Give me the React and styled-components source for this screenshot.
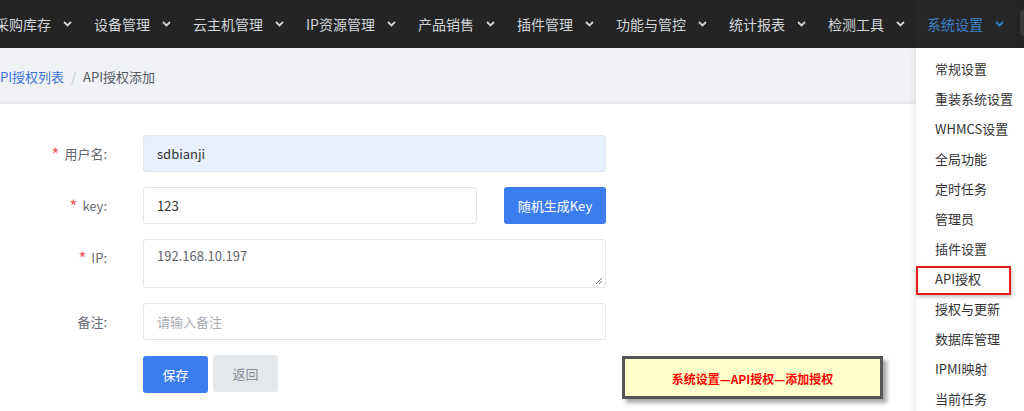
import React from "react";
import styled, { createGlobalStyle } from "styled-components";

const Global = createGlobalStyle`
  html, body { margin: 0; padding: 0; background: #fff; }
  body {
    width: 1024px; height: 411px; overflow: hidden;
    font-family: "Microsoft YaHei", "Noto Sans CJK SC", "Noto Sans", sans-serif;
  }
  * { box-sizing: border-box; }
`;

const Page = styled.div`
  position: relative;
  width: 1024px;
  height: 411px;
  overflow: hidden;
  display: flex;
  flex-direction: column;
`;

const NavBar = styled.nav`
  height: 48px;
  flex: none;
  background: #242424;
  display: flex;
  align-items: center;
  position: relative;
`;

const NavList = styled.div`
  display: flex;
  align-items: stretch;
  height: 100%;
  margin-left: -16px;
`;

const NavItem = styled.div`
  display: flex;
  align-items: center;
  padding: 0 11px;
  height: 100%;
  font-size: 14px;
  color: ${(p) => (p.$active ? "#3b82cc" : "#d3d6db")};
  background: ${(p) => (p.$active ? "#272727" : "transparent")};
  white-space: nowrap;
`;

const Chevron = styled.svg`
  margin-left: 12px;
  width: 9px;
  height: 6px;
  flex: none;
`;

const Handle = styled.div`
  position: absolute;
  right: -6px;
  top: 10px;
  width: 10px;
  height: 26px;
  border-radius: 4px;
  background: #3a3a3a;
`;

const Crumbs = styled.div`
  height: 56px;
  flex: none;
  background: #f1f2f6;
  display: flex;
  align-items: center;
  margin-left: -8px;
  font-size: 13px;
  box-shadow: inset 0 -4px 4px -3px rgba(0, 0, 0, 0.06);
`;

const CrumbLink = styled.span`
  color: #3a72d8;
`;

const CrumbSep = styled.span`
  color: #c8cbd0;
  margin: 0 7px;
`;

const CrumbCurrent = styled.span`
  color: #555a61;
`;

const Form = styled.div`
  padding-top: 31px;
  display: grid;
  grid-template-columns: 107px 463px;
  column-gap: 36px;
  row-gap: 15px;
  align-items: start;
`;

const Label = styled.div`
  height: 37px;
  display: flex;
  align-items: center;
  justify-content: flex-end;
  font-size: 13px;
  color: #666a70;
  white-space: nowrap;
`;

const Star = styled.span`
  color: #f05a5a;
  font-size: 17px;
  line-height: 1;
  margin-right: 5px;
`;

const Field = styled.div`
  display: flex;
  gap: 27px;
`;

const Input = styled.div`
  flex: ${(p) => (p.$grow ? "1" : "none")};
  width: ${(p) => p.$w || "auto"};
  height: 37px;
  border: 1px solid #e2e5e9;
  border-radius: 3px;
  background: ${(p) => (p.$autofill ? "#e8f0fe" : "#fff")};
  padding: 0 13px;
  display: flex;
  align-items: center;
  font-size: 13px;
  color: ${(p) => (p.$placeholder ? "#a8abb0" : "#333")};
`;

const TextArea = styled.div`
  position: relative;
  height: 49px;
  border: 1px solid #e2e5e9;
  border-radius: 3px;
  padding: 6px 13px;
  font-size: 13px;
  line-height: 19px;
  color: #60656c;
`;

const Grip = styled.svg`
  position: absolute;
  right: 2px;
  bottom: 2px;
  width: 8px;
  height: 8px;
`;

const Button = styled.div`
  width: ${(p) => p.$w};
  height: 37px;
  border-radius: 3px;
  display: flex;
  align-items: center;
  justify-content: center;
  font-size: 13px;
  background: ${(p) => (p.$variant === "gray" ? "#e4e8eb" : "#3b7cef")};
  color: ${(p) => (p.$variant === "gray" ? "#8a8e94" : "#fff")};
  margin-top: ${(p) => p.$mt || "0"};
`;

const Actions = styled.div`
  display: flex;
  gap: 5px;
  align-items: flex-start;
`;

const Menu = styled.div`
  position: absolute;
  left: 916px;
  top: 48px;
  width: 120px;
  height: 380px;
  background: #fff;
  box-shadow: -2px 0 6px rgba(0, 0, 0, 0.08);
  padding-top: 6px;
  display: flex;
  flex-direction: column;
`;

const MenuItem = styled.div`
  height: 30px;
  line-height: 30px;
  padding-left: 19px;
  font-size: 13px;
  color: #333;
  white-space: nowrap;
`;

const Highlight = styled.div`
  position: absolute;
  left: 916px;
  top: 266px;
  width: 95px;
  height: 29px;
  border: 2px solid #e41c1c;
  box-shadow: 1px 2px 4px rgba(0, 0, 0, 0.25);
`;

const Note = styled.div`
  position: absolute;
  left: 622px;
  top: 356px;
  width: 261px;
  height: 43px;
  background: #ffffcc;
  border: 3px solid #555;
  box-shadow: 4px 4px 4px rgba(0, 0, 0, 0.35);
  display: flex;
  align-items: center;
  justify-content: center;
  color: #f00;
  font-weight: bold;
  font-size: 12px;
  font-family: "Noto Sans CJK SC", sans-serif;
  padding-top: 1px;
`;

const navItems = [
  "采购库存",
  "设备管理",
  "云主机管理",
  "IP资源管理",
  "产品销售",
  "插件管理",
  "功能与管控",
  "统计报表",
  "检测工具",
  "系统设置",
];

const menuItems = [
  "常规设置",
  "重装系统设置",
  "WHMCS设置",
  "全局功能",
  "定时任务",
  "管理员",
  "插件设置",
  "API授权",
  "授权与更新",
  "数据库管理",
  "IPMI映射",
  "当前任务",
];

export default function App() {
  return (
    <Page>
      <Global />
      <NavBar>
        <NavList>
          {navItems.map((t) => (
            <NavItem key={t} $active={t === "系统设置"}>
              {t}
              <Chevron viewBox="0 0 9 6">
                <path
                  d="M1 1 L4.5 4.5 L8 1"
                  fill="none"
                  stroke="currentColor"
                  strokeWidth="1.8"
                />
              </Chevron>
            </NavItem>
          ))}
        </NavList>
        <Handle />
      </NavBar>
      <Crumbs>
        <CrumbLink>API授权列表</CrumbLink>
        <CrumbSep>/</CrumbSep>
        <CrumbCurrent>API授权添加</CrumbCurrent>
      </Crumbs>
      <Form>
        <Label>
          <Star>*</Star>用户名:
        </Label>
        <Field>
          <Input $grow $autofill>sdbianji</Input>
        </Field>

        <Label>
          <Star>*</Star>key:
        </Label>
        <Field>
          <Input $w="334px">123</Input>
          <Button $w="102px">随机生成Key</Button>
        </Field>

        <Label>
          <Star>*</Star>IP:
        </Label>
        <TextArea>
          192.168.10.197
          <Grip viewBox="0 0 8 8">
            <path d="M7 1 L1 7 M7 4 L4 7" stroke="#777" strokeWidth="1" />
          </Grip>
        </TextArea>

        <Label>备注:</Label>
        <Field>
          <Input $grow $placeholder>请输入备注</Input>
        </Field>

        <div />
        <Actions>
          <Button $w="65px" $mt="1px">保存</Button>
          <Button $w="65px" $variant="gray">返回</Button>
        </Actions>
      </Form>
      <Menu>
        {menuItems.map((m) => (
          <MenuItem key={m}>{m}</MenuItem>
        ))}
      </Menu>
      <Highlight />
      <Note>系统设置—API授权—添加授权</Note>
    </Page>
  );
}
